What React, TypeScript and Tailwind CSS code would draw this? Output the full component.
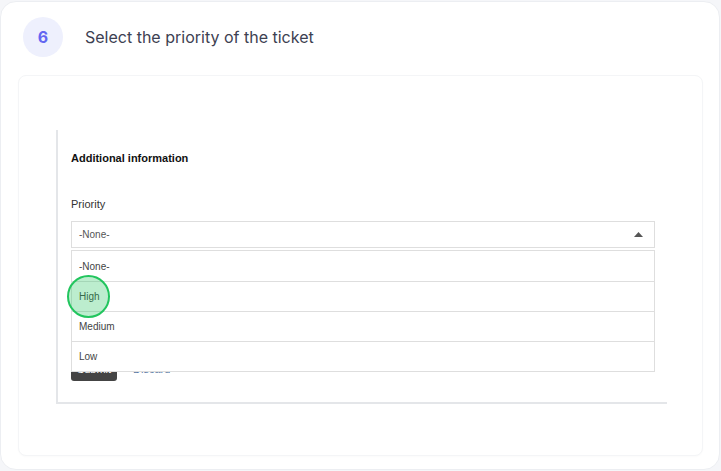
export default function App() {
  const options = ["-None-", "High", "Medium", "Low"];

  return (
    <div className="h-[471px] w-[721px] bg-[#f5f6f9] pt-px">
      {/* Step card */}
      <div className="h-[469px] w-[720px] rounded-2xl border border-[#eceef2] bg-white">
        <div className="flex items-center pl-[22px] pt-[15px]">
          <div className="flex h-10 w-10 items-center justify-center rounded-full bg-[#eef0fd] font-['Inter',sans-serif] text-base font-bold text-[#6366f1]">
            6
          </div>
          <span className="ml-[22px] font-['Inter',sans-serif] text-base text-[#3d4152]">
            Select the priority of the ticket
          </span>
        </div>

        {/* Screenshot frame */}
        <div className="ml-[17px] mt-[18px] h-[381px] w-[685px] rounded-lg border border-[#f4f5f7] bg-white pl-[37px] pt-[54px] shadow-[0_1px_2px_rgba(0,0,0,0.02)]">
          <div className="w-[611px] border-b-2 border-l-2 border-[#e4e6e9] pb-[21px] pl-[13px] pr-[10px] pt-5 font-['Liberation_Sans',Arial,sans-serif]">
            <div className="text-[11px] font-bold leading-4 text-[#111]">Additional information</div>
            <div className="mt-[30px] text-[11px] leading-4 text-[#333]">Priority</div>

            <div className="relative mt-[9px]">
              <div className="flex h-[27px] w-[584px] items-center justify-between border border-[#dedede] pl-[7px] pr-[11px] text-[10px] text-[#555]">
                <span>-None-</span>
                <svg width="9" height="5" viewBox="0 0 9 5">
                  <path d="M0 5 L4.5 0 L9 5 Z" fill="#555" />
                </svg>
              </div>

              {/* Open dropdown */}
              <div className="absolute left-0 top-[29px] z-10 w-[584px] border border-[#dedede] bg-white">
                {options.map((o, i) => (
                  <div
                    key={o}
                    className={`flex h-[30px] items-center pl-[7px] text-[10px] text-[#444] ${i > 0 ? "border-t border-[#dedede]" : ""}`}
                  >
                    {o}
                  </div>
                ))}
              </div>

              {/* Click marker */}
              <div className="absolute left-[-4px] top-[54px] z-20 h-[43px] w-[43px] rounded-full border-2 border-[#22c55e] bg-[rgba(34,197,94,0.3)]" />
            </div>

            <div className="mt-[109px] flex items-center gap-4">
              <div className="flex h-6 w-[46px] items-center justify-center rounded-[3px] bg-[#444] text-[11px] text-white">
                Submit
              </div>
              <span className="text-[11px] text-[#5b7aa5]">Discard</span>
            </div>
          </div>
        </div>
      </div>
    </div>
  );
}
